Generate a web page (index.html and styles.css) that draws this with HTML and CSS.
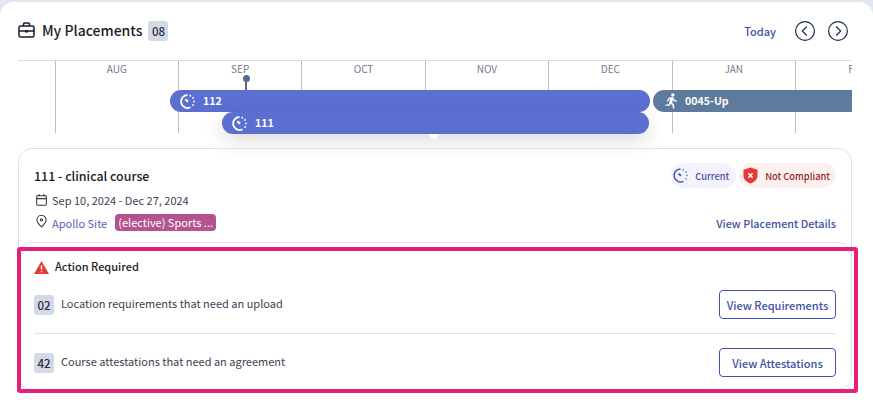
FILE: index.html
```html
<!DOCTYPE html>
<html>
<head>
  <meta charset="UTF-8">
  <title>My Placements</title>
  <link rel="stylesheet" href="styles.css">
</head>
<body>
  <div class="panel">
    <div class="head">
      <div class="head-left">
        <svg class="brief" width="17" height="16" viewBox="0 0 17 16" fill="none" stroke="#1c1c28" stroke-width="1.5">
          <rect x="1" y="4" width="15" height="11" rx="1.5"/>
          <path d="M5.5 4V2.2Q5.5 1 6.7 1H10.3Q11.500 1 11.5 2.2V4M1 9H16"/>
          <rect x="7" y="8" width="3" height="2.500" fill="#1c1c28" stroke="none"/>
        </svg>
        <h1>My Placements</h1>
        <span class="count">08</span>
      </div>
      <div class="head-right">
        <a class="today">Today</a>
        <svg width="20" height="20" viewBox="0 0 20 20" fill="none" stroke="#1c2b4a" stroke-width="1.200"><circle cx="10" cy="10" r="9.400"/><path d="M11.800 5.500L7.300 10L11.800 14.500"/></svg>
        <svg width="20" height="20" viewBox="0 0 20 20" fill="none" stroke="#1c2b4a" stroke-width="1.200"><circle cx="10" cy="10" r="9.400"/><path d="M8.200 5.500L12.700 10L8.200 14.500"/></svg>
      </div>
    </div>

    <div class="timeline">
      <div class="months">
        <div class="month stub"></div>
        <div class="month">AUG</div>
        <div class="month">SEP</div>
        <div class="month">OCT</div>
        <div class="month">NOV</div>
        <div class="month">DEC</div>
        <div class="month">JAN</div>
        <div class="month">FEB</div>
      </div>
      <div class="pin"></div>
      <div class="bar bar-112">
        <svg width="17" height="17" viewBox="0 0 17 17" fill="none" stroke="#fff" stroke-width="1.800"><path d="M8.500 2A6.500 6.500 0 1 0 11.500 14.300"/><path d="M6.300 6.300L9 8.800" stroke-width="2.200"/><path d="M11.300 2.700v.1M14 5v.1M15 8.500v.1M14 12v.1" stroke-linecap="round"/></svg>
        <span>112</span>
      </div>
      <div class="bar bar-111">
        <svg width="17" height="17" viewBox="0 0 17 17" fill="none" stroke="#fff" stroke-width="1.800"><path d="M8.500 2A6.500 6.500 0 1 0 11.500 14.300"/><path d="M6.300 6.300L9 8.800" stroke-width="2.200"/><path d="M11.300 2.700v.1M14 5v.1M15 8.500v.1M14 12v.1" stroke-linecap="round"/></svg>
        <span>111</span>
      </div>
      <div class="caret"></div>
      <div class="bar bar-up">
        <svg width="14" height="16" viewBox="0 0 14 16" fill="#fff"><circle cx="8.800" cy="2" r="1.700"/><path d="M6 4.300L9.300 4.300L10.500 6.800L13 7.800L12.500 8.900L9.600 7.900L8.900 7L8.100 9.700L10.200 11.500L10.200 15.500L8.800 15.500L8.600 12.300L6.400 10.700L5.600 12.800L1.500 12.800L1.500 11.500L4.600 11.500L6.200 6L5 6.500L4 8.700L2.900 8.200L4.200 5.300Z"/></svg>
        <span>0045-Up</span>
      </div>
    </div>

    <div class="card">
      <div class="card-top">
        <div class="card-row">
          <h2>111 - clinical course</h2>
          <div class="chips">
            <span class="chip chip-current">
              <svg width="17" height="17" viewBox="0 0 17 17" fill="none" stroke="#3f51b5" stroke-width="1.400"><path d="M8.500 2A6.500 6.500 0 1 0 11.500 14.300"/><path d="M6.600 6.800L9 8.800" stroke-width="1.800"/><path d="M11.300 2.700v.1M14 5v.1M15 8.500v.1M14 12v.1" stroke-linecap="round"/></svg>
              Current
            </span>
            <span class="chip chip-bad">
              <svg width="15" height="17" viewBox="0 0 15 17"><path d="M7.500 .5L14.500 2.800V8.500C14.500 12.500 11.500 15 7.500 16.500C3.500 15 .5 12.500 .5 8.500V2.800Z" fill="#e53935"/><path d="M5.300 6.300L9.700 10.700M9.700 6.300L5.300 10.700" stroke="#fff" stroke-width="1.500"/></svg>
              Not Compliant
            </span>
          </div>
        </div>
        <div class="date-row">
          <svg width="11" height="12" viewBox="0 0 12 13" fill="none" stroke="#333" stroke-width="1.100"><rect x=".7" y="1.800" width="10.600" height="10.400" rx="1"/><path d="M.7 5H11.300M3.300 0V2.500M8.700 0V2.500"/></svg>
          <span>Sep 10, 2024 - Dec 27, 2024</span>
        </div>
        <div class="card-row site-row">
          <div class="site">
            <svg width="11" height="13" viewBox="0 0 12 14" fill="none" stroke="#333" stroke-width="1.100"><path d="M6 13C3 10 1 7.800 1 5.300A5 5 0 0 1 11 5.300C11 7.800 9 10 6 13Z"/><circle cx="6" cy="5.200" r="1.300"/></svg>
            <a class="site-link">Apollo Site</a>
            <span class="tag">(elective) Sports ...</span>
          </div>
          <a class="details">View Placement Details</a>
        </div>
      </div>

      <div class="action">
        <div class="action-title">
          <svg width="15" height="13" viewBox="0 0 15 13"><path d="M7.500 0L15 13H0Z" fill="#e53935"/><path d="M7.500 4.500V8.800M7.500 10V11.300" stroke="#fff" stroke-width="1.400"/></svg>
          <span>Action Required</span>
        </div>
        <div class="action-row first">
          <span class="count">02</span>
          <span class="action-text">Location requirements that need an upload</span>
          <a class="btn">View Requirements</a>
        </div>
        <div class="action-row">
          <span class="count">42</span>
          <span class="action-text">Course attestations that need an agreement</span>
          <a class="btn">View Attestations</a>
        </div>
      </div>
    </div>
    <div class="highlight"></div>
  </div>
</body>
</html>
```

FILE: styles.css
```css
* {
  box-sizing: border-box;
}
html, body {
  height: 100%;
}
body {
  margin: 0;
  padding-top: 2px;
  background-color: #e2e6f0;
  font-family: "Noto Sans CJK SC", "Noto Sans", sans-serif;
  color: #1c1c28;
  overflow: hidden;
}
.panel {
  position: relative;
  height: 398px;
  background-color: #fff;
  border-radius: 14px 14px 0 0;
  padding: 0 21px 0 18px;
}

/* header */
.head {
  display: flex;
  justify-content: space-between;
  align-items: center;
  height: 58px;
  padding-right: 4px;
}
.head-left {
  display: flex;
  align-items: center;
}
.brief {
  margin-right: 7px;
  margin-top: -2px;
}
h1 {
  margin: -2px 6px 0 0;
  font-size: 14px;
  font-weight: 500;
}
.count {
  display: inline-flex;
  align-items: center;
  justify-content: center;
  width: 20px;
  height: 20px;
  flex-shrink: 0;
  border-radius: 3px;
  background-color: #d3d9e6;
  font-size: 11.500px;
  font-weight: 500;
  color: #2a2f3c;
}
.head-right {
  display: flex;
  align-items: center;
  gap: 13px;
}
.today {
  margin-right: 6px;
  font-size: 11px;
  font-weight: 500;
  color: #3f51a5;
}

/* timeline */
.timeline {
  position: relative;
  height: 88px;
}
.months {
  display: flex;
  height: 73px;
  width: 834px;
  overflow: hidden;
  border-top: 1px solid #dcdcdc;
}
.month {
  flex: 0 0 123.4px;
  border-left: 1px solid #bdbdbd;
  text-align: center;
  font-size: 10px;
  line-height: 16px;
  color: #6f7a8c;
}
.month.stub {
  flex-basis: 36.6px;
  border-left: none;
}
.pin {
  position: absolute;
  left: 225px;
  top: 15px;
  width: 6px;
  height: 16px;
  background: linear-gradient(#4f6d8f, #4f6d8f) center / 2px 100% no-repeat;
}
.pin::before {
  content: "";
  position: absolute;
  left: -0.5px;
  top: 0;
  width: 7px;
  height: 7px;
  border-radius: 50%;
  background-color: #4f6d8f;
}
.bar {
  position: absolute;
  display: flex;
  align-items: center;
  height: 22px;
  padding-left: 9px;
  font-size: 10.600px;
  font-weight: 700;
  color: #fff;
  background-color: #5c6fd0;
}
.bar span {
  margin-left: 7px;
  margin-top: -2px;
}
.bar-112 {
  left: 152px;
  top: 30px;
  width: 480px;
  border-radius: 11px;
}
.bar-111 {
  left: 204px;
  top: 52px;
  width: 427px;
  border-radius: 11px;
  box-shadow: 0 6px 20px rgba(0, 0, 0, 0.15);
}
.bar-up {
  left: 635px;
  top: 30px;
  width: 199px;
  padding-left: 11px;
  border-radius: 11px 0 0 11px;
  background-color: #5e7a9c;
}
.caret {
  position: absolute;
  z-index: 1;
  left: 410px;
  top: 74px;
  width: 12px;
  height: 6px;
  background-color: #fff;
  clip-path: polygon(0 0, 100% 0, 50% 100%);
}

/* detail card */
.card {
  position: relative;
  width: 834px;
  height: 242px;
  border: 1px solid #e0e0e0;
  border-radius: 14px;
}
.card-top {
  height: 93px;
  padding: 14px 15px 0 15px;
}
.card-row {
  display: flex;
  justify-content: space-between;
  align-items: center;
}
h2 {
  margin: 0;
  font-size: 12.400px;
  font-weight: 500;
}
.chips {
  display: flex;
  gap: 3px;
}
.chip {
  display: flex;
  align-items: center;
  gap: 6px;
  height: 25px;
  padding: 0 7px 0 1px;
  border-radius: 13px;
  font-size: 9.300px;
  font-weight: 500;
}
.chip-current {
  background-color: #f3f2fd;
  color: #3f51a5;
}
.chip-bad {
  padding: 0 6px 0 4px;
  gap: 7px;
  background-color: #fdf0ef;
  color: #8c2a2a;
}
.date-row {
  display: flex;
  align-items: center;
  gap: 5px;
  height: 16px;
  margin-top: 4px;
  padding-left: 2px;
  font-size: 11px;
  color: #3c4252;
}
.site-row {
  height: 17px;
  margin-top: 6px;
}
.site {
  display: flex;
  align-items: center;
  font-size: 11px;
}
.site svg {
  margin: -3px 5px 0 2px;
}
.site-link {
  color: #5461b8;
}
.tag {
  margin-left: 8px;
  padding: 0 3px;
  height: 17px;
  line-height: 16px;
  border-radius: 4px;
  background-color: #b4548f;
  color: #fff;
}
.details {
  font-size: 10.800px;
  font-weight: 500;
  color: #3f51a5;
}

/* action required */
.action {
  height: 147px;
  padding: 15px 15px 0 15px;
  border-top: 1px solid #e0e0e0;
  border-radius: 14px 14px 0 0;
}
.action-title {
  display: flex;
  align-items: center;
  gap: 6px;
  height: 18px;
  font-size: 11px;
  font-weight: 500;
}
.action-title span {
  margin-top: -2px;
}
.action-row {
  display: flex;
  align-items: center;
  height: 57px;
}
.action-row.first {
  height: 58px;
  border-bottom: 1px solid #e2e2e2;
}
.action-text {
  flex: 1;
  margin-left: 7px;
  margin-top: -3px;
  font-size: 11px;
  color: #3c4252;
}
.btn {
  display: flex;
  align-items: center;
  justify-content: center;
  width: 117px;
  height: 29px;
  border: 1px solid #3f51b5;
  border-radius: 4px;
  font-size: 11px;
  font-weight: 500;
  color: #3f51a5;
}
.highlight {
  position: absolute;
  left: 17px;
  top: 245px;
  width: 841px;
  height: 146px;
  border: 4px solid #e61e7c;
  border-radius: 3px;
}
```
